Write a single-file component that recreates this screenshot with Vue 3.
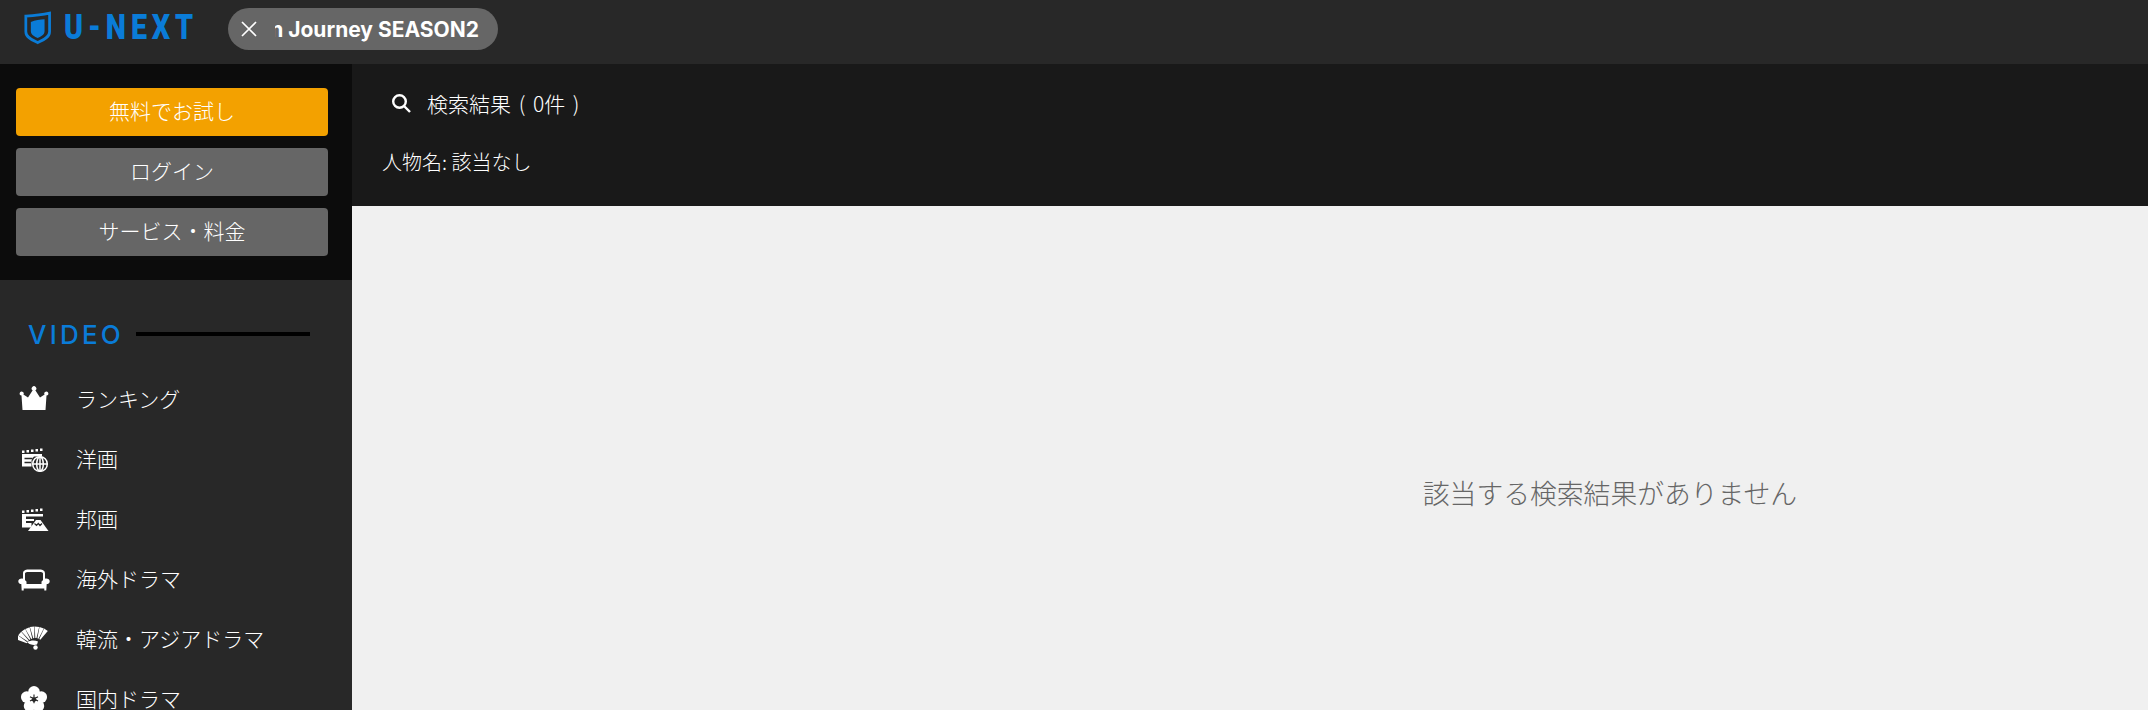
<template>
  <div class="page">
    <header class="topbar">
      <div class="logo">
        <svg class="shield" width="30" height="36" viewBox="0 0 30 36">
          <path d="M2 5 C10 4.500 20 3.500 28 1.800 V22 C28 28.500 20 31.500 15 34 C10 31.500 2 28.500 2 22 Z" fill="none" stroke="#0a7cd8" stroke-width="3" />
          <path d="M7.500 11.500 C12 9.500 18 9 22.500 8.500 V21.500 C22.500 25.500 18 27.500 15 29 C12 27.500 7.500 25.500 7.500 21.500 Z" fill="#0a7cd8" />
        </svg>
        <span class="logo-text">U-NEXT</span>
      </div>
      <div class="pill">
        <svg class="pill-x" width="16" height="16" viewBox="0 0 16 16">
          <path d="M1 1 L15 15 M15 1 L1 15" stroke="#fff" stroke-width="1.700" />
        </svg>
        <div class="pill-clip"><span>n Journey SEASON2</span></div>
      </div>
    </header>

    <div class="body">
      <aside class="sidebar">
        <div class="account">
          <button class="btn btn-try">無料でお試し</button>
          <button class="btn">ログイン</button>
          <button class="btn">サービス・料金</button>
        </div>
        <div class="section-title">
          <span>VIDEO</span>
          <i></i>
        </div>
        <ul class="menu">
          <li>
            <svg width="32" height="32" viewBox="0 0 32 32">
              <path fill="#fff" d="M4.500 28 L3.500 13.500 A2 2 0 1 1 5.400 12.500 L10 15.500 L14.700 8.300 A2.300 2.300 0 1 1 17.300 8.300 L22 15.500 L26.600 12.500 A2 2 0 1 1 28.500 13.500 L27.500 28 Z" />
            </svg>
            <span>ランキング</span>
          </li>
          <li>
            <svg width="32" height="32" viewBox="-1 -1 32 32">
              <g fill="#fff">
                <path d="M3 7.500 h2.500 v2.500 h-2.500 Z M7.500 7 h2.500 v2.500 h-2.500 Z M12 6.500 h2.500 v2.500 h-2.500 Z M16.500 6 h2.500 v2.500 h-2.500 Z M21 5.500 h2.500 v2.500 h-2.500 Z" />
                <path d="M3 11 H23 V13.500 H15 A9 9 0 0 0 12.500 17.500 V23.500 H3 Z" />
              </g>
              <path d="M5.500 15.500 h8 M5.500 19.500 h6.500" stroke="#282828" stroke-width="1.400" />
              <g fill="none" stroke="#fff" stroke-width="1.500">
                <circle cx="21" cy="21" r="7.300" />
                <ellipse cx="21" cy="21" rx="3.300" ry="7.300" />
                <path d="M13.700 21 H28.300 M21 13.700 V28.300" />
              </g>
            </svg>
            <span>洋画</span>
          </li>
          <li>
            <svg width="32" height="32" viewBox="-1 -1 32 32">
              <g fill="#fff">
                <path d="M3 7.500 h2.500 v2.500 h-2.500 Z M7.500 7 h2.500 v2.500 h-2.500 Z M12 6.500 h2.500 v2.500 h-2.500 Z M16.500 6 h2.500 v2.500 h-2.500 Z M21 5.500 h2.500 v2.500 h-2.500 Z" />
                <path d="M3 11 H24 V13.500 H3 Z M3 13.500 H7 V24.500 H3 Z M7 16 H15 V18 H7 Z M7 20 H12.500 V24.500 H7 Z" />
                <path d="M9 28 L17 17 H21.500 L29.500 28 Z" />
              </g>
              <path d="M15.500 20.500 L17.500 22.500 L19.300 20.500 L21 22.500 L23 20.500" fill="none" stroke="#282828" stroke-width="1.200" />
            </svg>
            <span>邦画</span>
          </li>
          <li>
            <svg width="32" height="32" viewBox="0 -2 32 32">
              <path fill="#fff" d="M5 14.800 V9.500 C5 6.500 7.500 5.500 10 5.500 H22 C24.500 5.500 27 6.500 27 9.500 V14.800 C29 14 32 15.500 31.700 17.500 C31.500 19.500 30 20 28.700 20 L28.300 26.500 H26.300 V24.500 H5.700 V26.500 H3.700 L3.300 20 C2 20 .5 19.500 .300 17.500 C0 15.500 3 14 5 14.800 Z M8.500 18 V20 H23.500 V18 C23.500 17 25 16.500 25 16 V9.500 C25 8.500 23.500 8 22 8 H10 C8.500 8 7 8.500 7 9.500 V16 C7 16.500 8.500 17 8.500 18 Z" />
            </svg>
            <span>海外ドラマ</span>
          </li>
          <li>
            <svg width="32" height="32" viewBox="0 0 32 32">
              <g fill="#fff">
                <path v-for="d in fanBlades" :key="d" :d="d" />
                <path d="M9 20 C13 18 17 18 20 19.500 L19 22.500 C15.500 23.500 11.500 22.500 9 20 Z" />
                <circle cx="17.500" cy="25.500" r="2.200" />
              </g>
            </svg>
            <span>韓流・アジアドラマ</span>
          </li>
          <li>
            <svg width="32" height="32" viewBox="-2 -3 36 36">
              <g fill="#fff">
                <circle cx="16" cy="8" r="6.500" />
                <circle cx="7.800" cy="14" r="6.500" />
                <circle cx="24.200" cy="14" r="6.500" />
                <circle cx="11" cy="24" r="6.500" />
                <circle cx="21" cy="24" r="6.500" />
              </g>
              <g stroke="#282828" stroke-width="1.300">
                <path d="M16 11 V21 M11.500 13.500 L20.500 18.500 M20.500 13.500 L11.500 18.500" />
              </g>
            </svg>
            <span>国内ドラマ</span>
          </li>
        </ul>
      </aside>

      <main class="main">
        <section class="result-head">
          <div class="result-title">
            <svg width="20" height="20" viewBox="0 0 20 20">
              <circle cx="8.500" cy="8.500" r="6.300" fill="none" stroke="#fff" stroke-width="2.400" />
              <path d="M13 13 L19 19" stroke="#fff" stroke-width="2.400" />
            </svg>
            <span>検索結果 ( 0件 )</span>
          </div>
          <p class="result-sub">人物名: 該当なし</p>
        </section>
        <section class="empty">該当する検索結果がありません</section>
      </main>
    </div>
  </div>
</template>

<script setup>
// folding fan: 8 wedges fanned out around the pivot
const fanBlades = Array.from({ length: 8 }, (_, i) => {
  const a = ((-62 + i * 13.5) * Math.PI) / 180;
  const w = 0.11;
  const pt = (r, t) => `${(17 + r * Math.sin(t)).toFixed(1)} ${(25 - r * Math.cos(t)).toFixed(1)}`;
  return `M${pt(9, a - w * 0.6)} L${pt(20.5, a - w)} L${pt(20.5, a + w)} L${pt(9, a + w * 0.6)} Z`;
});
</script>

<style>
html,
body {
  margin: 0;
  height: 100%;
  overflow: hidden;
}
</style>

<style scoped>
.page {
  height: 100vh;
  display: flex;
  flex-direction: column;
  overflow: hidden;
  font-family: "Noto Sans CJK JP", "Noto Sans", sans-serif;
  font-weight: 300;
  background: #f0f0f0;
}

.topbar {
  flex: none;
  height: 64px;
  display: flex;
  align-items: center;
  background: #282828;
}

.logo {
  width: 228px;
  margin-top: -8px;
  display: flex;
  align-items: center;
  padding-left: 24px;
  box-sizing: border-box;
  gap: 13px;
}

.logo-text {
  font-family: "Roboto", sans-serif;
  font-weight: 900;
  font-size: 35px;
  line-height: 36px;
  letter-spacing: 6px;
  color: #0a7cd8;
  transform: scaleX(0.82);
  transform-origin: left center;
  white-space: nowrap;
}

.pill {
  width: 270px;
  height: 42px;
  margin-top: -6px;
  border-radius: 21px;
  background: #666;
  display: flex;
  align-items: center;
  padding: 0 19px 0 13px;
  box-sizing: border-box;
}

.pill-x {
  flex: none;
}

.pill-clip {
  flex: 1;
  margin-left: 18px;
  overflow: hidden;
  display: flex;
  justify-content: flex-end;
  white-space: nowrap;
  font-family: "Inter", sans-serif;
  font-weight: 700;
  font-size: 21px;
  color: #fff;
}

.body {
  flex: 1;
  min-height: 0;
  display: flex;
}

.sidebar {
  flex: none;
  width: 352px;
  background: #282828;
  overflow: hidden;
}

.account {
  background: #0c0c0c;
  padding: 24px 24px 24px 16px;
  display: flex;
  flex-direction: column;
  gap: 12px;
}

.btn {
  height: 48px;
  border: 0;
  border-radius: 4px;
  background: #666;
  color: #fff;
  font-family: inherit;
  font-weight: inherit;
  font-size: 21px;
  padding: 0 0 5px;
}

.btn-try {
  background: #f3a100;
}

.section-title {
  display: flex;
  align-items: center;
  height: 36px;
  margin-top: 36px;
  padding-left: 28px;
  font-family: "Inter", sans-serif;
  font-size: 26px;
  font-weight: 500;
  letter-spacing: 3.200px;
  color: #0a7cd8;
}

.section-title span {
  width: 108px;
}

.section-title i {
  width: 174px;
  height: 4px;
  background: #000;
}

.menu {
  list-style: none;
  margin: 0;
  padding: 16px 0 0 18px;
  color: #fff;
  font-size: 21px;
}

.menu li {
  height: 60px;
  display: flex;
  align-items: center;
  gap: 26px;
  white-space: nowrap;
}

.menu svg {
  flex: none;
}

.main {
  flex: 1;
  min-width: 0;
  display: flex;
  flex-direction: column;
}

.result-head {
  flex: none;
  height: 142px;
  box-sizing: border-box;
  padding: 19px 30px 0;
  background: #191919;
  color: #fff;
}

.result-title {
  display: flex;
  align-items: center;
  gap: 16px;
  height: 40px;
  padding-left: 9px;
  font-size: 21px;
  word-spacing: 3px;
}

.result-sub {
  margin: 25px 0 0;
  font-size: 20px;
  line-height: 28px;
}

.empty {
  flex: 1;
  display: flex;
  align-items: center;
  justify-content: center;
  padding: 68px 0 0 720px;
  color: #666;
  font-size: 26.800px;
}
</style>
